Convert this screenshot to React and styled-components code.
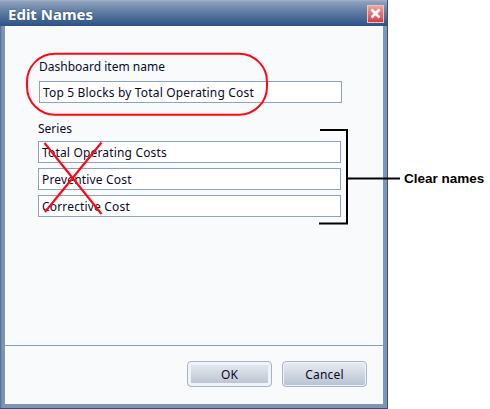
import React from 'react';
import styled, { createGlobalStyle } from 'styled-components';

const GlobalStyle = createGlobalStyle`
  html, body {
    margin: 0;
    padding: 0;
    background: #fff;
  }
  #root {
    width: 490px;
    height: 409px;
    overflow: hidden;
  }
`;

const Page = styled.div`
  position: relative;
  width: 490px;
  height: 409px;
  font-family: "Noto Sans", Tahoma, sans-serif;
  font-size: 12px;
  color: #0a0a28;
`;

const Dialog = styled.div`
  box-sizing: border-box;
  width: 388px;
  height: 409px;
  display: flex;
  flex-direction: column;
  background: linear-gradient(90deg, #4c6a94 0, #7e95b5 2px, #7e95b5 100%);
  border-right: 1px solid #35517e;
  border-bottom: 1px solid #35517e;
  padding-bottom: 4px;
`;

const TitleBar = styled.div`
  box-sizing: border-box;
  height: 26px;
  flex: none;
  display: flex;
  align-items: center;
  justify-content: space-between;
  padding: 1px 3px 0 8px;
  background: linear-gradient(#a5b4c9 0, #8c9fb9 2px, #5f7da3 12px, #2f5588 25px);
`;

const Title = styled.span`
  font-family: "Noto Sans", Tahoma, sans-serif;
  font-size: 15px;
  font-weight: bold;
  color: #fff;
  text-shadow: 0 0 2px #33507c;
`;

const CloseButton = styled.button`
  box-sizing: border-box;
  width: 17px;
  height: 18px;
  padding: 0;
  display: flex;
  align-items: center;
  justify-content: center;
  border: 1px solid #e8c4c4;
  background: linear-gradient(#eea3a3, #d83c40);

  svg {
    display: block;
  }
`;

const Content = styled.div`
  flex: 1;
  display: flex;
  flex-direction: column;
  margin: 0 4px 0 5px;
  background: #f8fafc;
`;

const Form = styled.div`
  box-sizing: border-box;
  height: 320px;
  padding: 33px 40px 0 33px;
  border-bottom: 1px solid #8b9db8;
`;

const Group = styled.div`
  display: flex;
  flex-direction: column;
  gap: ${(p) => p.$gap}px;
  margin-left: ${(p) => p.$indent || 0}px;
  margin-bottom: ${(p) => p.$after || 0}px;
`;

const Label = styled.label`
  height: 15px;
  line-height: 15px;
  margin-bottom: ${(p) => p.$after}px;
`;

const Field = styled.div`
  box-sizing: border-box;
  width: 303px;
  height: 22px;
  line-height: 21px;
  padding-left: 3px;
  background: #fff;
  border: 1px solid #8fa2bd;
  white-space: nowrap;
  letter-spacing: 0.17px;
`;

const Footer = styled.div`
  flex: 1;
  display: flex;
  justify-content: flex-end;
  align-items: flex-start;
  gap: 10px;
  padding: 15px 16px 0 0;
`;

const Button = styled.button`
  box-sizing: border-box;
  width: 85px;
  height: 26px;
  padding: 0;
  font: inherit;
  letter-spacing: 0.17px;
  color: inherit;
  border: 1px solid #a6b4ca;
  border-radius: 4px;
  background: linear-gradient(#e9edf2, #b7c1d0);
  box-shadow: inset 0 0 0 ${(p) => (p.$primary ? 3 : 1)}px #f0f3f7;
`;

const Overlay = styled.svg`
  position: absolute;
  left: 0;
  top: 0;
  pointer-events: none;
`;

const Note = styled.span`
  position: absolute;
  left: 404px;
  top: 171px;
  font-family: "Liberation Sans", Arial, sans-serif;
  font-size: 13.5px;
  font-weight: bold;
  line-height: 16px;
  color: #000;
`;

const seriesNames = ['Total Operating Costs', 'Preventive Cost', 'Corrective Cost'];

const App = () => (
  <Page>
    <GlobalStyle />
    <Dialog>
      <TitleBar>
        <Title>Edit Names</Title>
        <CloseButton aria-label="Close">
          <svg width="11" height="11" viewBox="0 0 11 11">
            <path d="M1.500 1.500 L9.500 9.500 M9.500 1.500 L1.500 9.500" stroke="#fff" strokeWidth="2.6" />
          </svg>
        </CloseButton>
      </TitleBar>
      <Content>
        <Form>
          <Group $gap={0} $indent={1} $after={18}>
            <Label $after={7}>Dashboard item name</Label>
            <Field>Top 5 Blocks by Total Operating Cost</Field>
          </Group>
          <Group $gap={5}>
            <Label $after={0}>Series</Label>
            {seriesNames.map((name) => (
              <Field key={name}>{name}</Field>
            ))}
          </Group>
        </Form>
        <Footer>
          <Button $primary>OK</Button>
          <Button>Cancel</Button>
        </Footer>
      </Content>
    </Dialog>
    <Overlay width="490" height="409" viewBox="0 0 490 409">
      <rect x="27" y="53.700" width="240" height="61" rx="28" fill="none" stroke="#ff0a14" strokeWidth="2" />
      <path d="M44.500 143 L101.500 214 M101.500 142.500 L45 212" stroke="#ff0a14" strokeWidth="2.200" fill="none" />
      <path d="M320 130 H347 V223.500 H319 M347 178.500 H400" stroke="#000" strokeWidth="2" fill="none" />
    </Overlay>
    <Note>Clear names</Note>
  </Page>
);

export default App;
